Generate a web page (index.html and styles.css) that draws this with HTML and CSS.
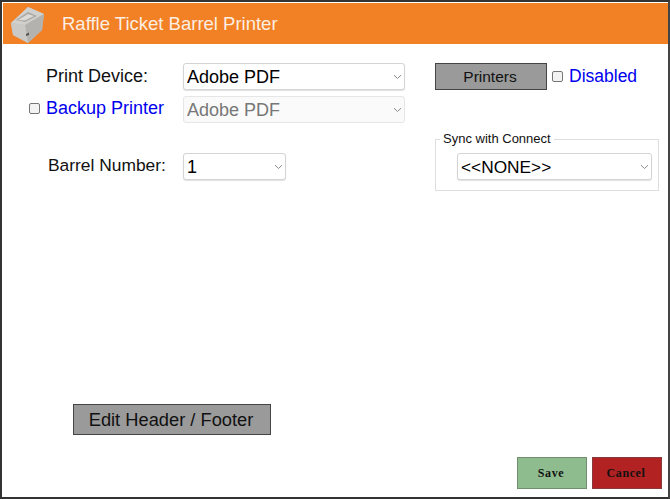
FILE: index.html
```html
<!DOCTYPE html>
<html lang="en">
<head>
<meta charset="utf-8">
<title>Raffle Ticket Barrel Printer</title>
<link rel="stylesheet" href="styles.css">
</head>
<body>
<div class="window">
  <header class="titlebar">
    <svg class="logo" viewBox="0 0 38 38" width="38" height="38" aria-hidden="true">
      <path d="M1 18 L18 2 L34 9 L32 25 L18 38 L3 30 Z" fill="#bfbdb9"/>
      <path d="M1 18 L18 2 L34 9 L15 20 Z" fill="#d2d0cc"/>
      <path d="M15 20 L34 9 L32 25 L18 38 Z" fill="#b4b2ae"/>
      <path d="M1 18 L15 20 L18 38 L3 30 Z" fill="#cbc9c5"/>
      <path d="M6 15 L18 7 L27 11 L15 17 Z" fill="#a9a7a3"/>
      <path d="M8 15 L18 9 L24 11 L15 15.500 Z" fill="#dddbd7"/>
      <path d="M16 29 L19 27.500 L19 30 L16 31 Z" fill="#55534f"/>
    </svg>
    <h1 class="title">Raffle Ticket Barrel Printer</h1>
  </header>
  <main class="content">
    <div class="columns">
      <div class="left">
        <div class="row">
          <label class="label label-device" for="device">Print Device:</label>
          <select id="device" class="select select-wide"><option>Adobe PDF</option></select>
        </div>
        <div class="row row-backup">
          <label class="label label-backup"><input type="checkbox" class="check"><span class="link">Backup Printer</span></label>
          <select class="select select-wide" disabled><option>Adobe PDF</option></select>
        </div>
        <div class="row row-barrel">
          <label class="label label-barrel" for="barrel">Barrel Number:</label>
          <select id="barrel" class="select select-small"><option>1</option></select>
        </div>
      </div>
      <div class="right">
        <div class="printers-row">
          <button type="button" class="btn btn-printers">Printers</button>
          <label class="disabled-label"><input type="checkbox" class="check"><span class="link">Disabled</span></label>
        </div>
        <fieldset class="sync">
          <legend class="sync-legend">Sync with Connect</legend>
          <select class="select select-sync"><option>&lt;&lt;NONE&gt;&gt;</option></select>
        </fieldset>
      </div>
    </div>
    <div class="edit-row">
      <button type="button" class="btn btn-edit">Edit Header / Footer</button>
    </div>
    <div class="actions">
      <button type="button" class="action action-save">Save</button>
      <button type="button" class="action action-cancel">Cancel</button>
    </div>
  </main>
</div>
</body>
</html>
```
FILE: styles.css
```css
* { box-sizing: border-box; }
html, body { margin: 0; padding: 0; }
body { width: 670px; height: 499px; background: #fff; font-family: "Liberation Sans", Arial, sans-serif; overflow: hidden; }
.window { width: 670px; height: 499px; border: 2px solid #333; border-right-color: #444; display: flex; flex-direction: column; background: #fff; padding: 1px 0 0 1px; }
.titlebar { height: 41px; background: #f28024; display: flex; align-items: center; padding-left: 7px; flex: none; }
.logo { flex: none; }
.title { margin: 0 0 0 14px; font-size: 18.5px; font-weight: 400; color: #fbeee2; }
.content { flex: 1; display: flex; flex-direction: column; min-height: 0; padding-top: 19px; }
.columns { display: flex; }
.left { width: 432px; flex: none; display: flex; flex-direction: column; }
.row { display: flex; align-items: center; height: 27px; }
.row-backup { margin-top: 6px; }
.row-barrel { margin-top: 30px; }
.label { font-size: 18px; color: #111; flex: none; width: 180px; }
.label-device { padding-left: 43px; }
.label-barrel { padding-left: 45px; padding-bottom: 2px; font-size: 17.4px; }
.label-backup { display: flex; align-items: center; padding-left: 26px; padding-bottom: 3px; }
.link { color: #0000ee; }
.label-backup .link { margin-left: 6px; }
.check { width: 11px; height: 11px; margin: 0; flex: none; appearance: none; background: #f3f3f3; border: 1px solid #767676; border-radius: 2px; }
.select { height: 27px; font-family: inherit; font-size: 18px; color: #000; background-color: #fff; border: 1px solid #d4d4d4; border-radius: 3px; box-shadow: 0 1px 1px rgba(0,0,0,.12); padding: 0 0 0 3px; appearance: none; background-image: url("data:image/svg+xml,%3Csvg xmlns='http://www.w3.org/2000/svg' width='9' height='6' viewBox='0 0 9 6'%3E%3Cpath d='M1 1.200 L4.500 4.500 L8 1.200' fill='none' stroke='%23888' stroke-width='1'/%3E%3C/svg%3E"); background-repeat: no-repeat; background-position: calc(100% - 2px) 10px; }
.select:disabled { color: #777; background-color: #fafafa; border-color: #e6e6e6; box-shadow: none; opacity: 1; }
.select-wide { width: 222px; }
.select-small { width: 103px; }
.select-sync { width: 195px; display: block; font-size: 17.3px; }
.right { width: 224px; flex: none; }
.printers-row { display: flex; align-items: center; height: 27px; }
.btn { font-family: inherit; color: #111; background: #9a9a9a; border: 1px solid #444; padding: 0; }
.btn-printers { width: 112px; height: 27px; font-size: 15.5px; flex: none; padding-right: 2px; }
.disabled-label { display: flex; align-items: center; margin-left: 5px; font-size: 17.5px; }
.disabled-label .link { margin-left: 6px; }
.sync { margin: 42px 0 0; padding: 7px 0 0 21px; border: 1px solid #dedede; width: 224px; height: 59px; }
.sync-legend { font-size: 13px; color: #111; padding: 0 3px; margin-left: -17px; line-height: 14px; }
.edit-row { margin-top: 213px; padding-left: 70px; }
.btn-edit { width: 198px; height: 31px; font-size: 18.3px; padding: 1px 2px 0 0; display: block; }
.actions { margin-top: auto; display: flex; justify-content: flex-end; gap: 5px; padding: 0 6px 8px 0; }
.action { width: 70px; height: 32px; font-family: "Liberation Serif", serif; font-size: 12px; font-weight: 700; letter-spacing: .6px; color: #111; padding: 0 2px 0 0; }
.action-save { background: #8fbc8f; border: 1px solid #6f8f6f; }
.action-cancel { background: #b22222; border: 1px solid #8a3a3a; }
```
